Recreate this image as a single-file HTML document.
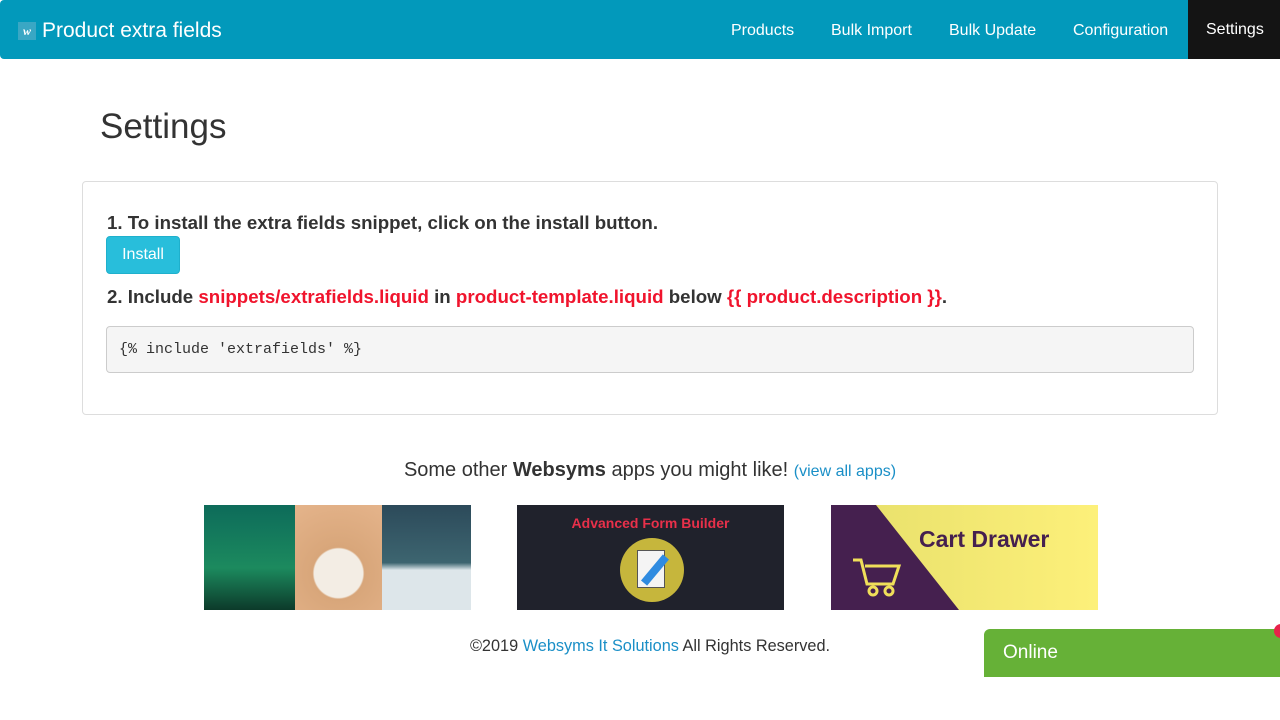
<!DOCTYPE html>
<html><head><meta charset="utf-8"><style>
*{box-sizing:border-box}
body{margin:0;width:1280px;height:720px;overflow:hidden;font-family:"Liberation Sans",sans-serif;color:#333;background:#fff;position:relative}
.nav{position:absolute;left:0;top:0;width:1280px;height:59px;background:#0299bb;border-radius:4px 0 0 4px}
.brand{position:absolute;left:18px;top:19px;color:#fff;font-size:21px;line-height:24px}
.brand i{display:inline-block;width:18px;height:18px;background:#3aa7c4;font-style:italic;font-weight:bold;font-size:12px;text-align:center;line-height:18px;vertical-align:2px;margin-right:6px;font-family:"Liberation Serif",serif}
.nav a{position:absolute;top:1px;height:59px;line-height:59px;color:#fff;font-size:16px;text-decoration:none}
.act{background:#141414;padding:0 18px;top:0!important}
h1{position:absolute;left:100px;top:107px;margin:0;font-size:35px;font-weight:normal;color:#333}
.panel{position:absolute;left:82px;top:181px;width:1136px;height:234px;border:1px solid #ddd;border-radius:4px}
.t{position:absolute;left:107px;font-size:18.7px;font-weight:bold;color:#333}
.r{color:#f0142d}
.btn{position:absolute;left:106px;top:236px;width:74px;height:38px;background:#28bedb;border:1px solid #1fb0cc;border-radius:4px;color:#fff;font-size:16px;text-align:center;line-height:36px}
pre{position:absolute;left:106px;top:326px;width:1088px;height:47px;margin:0;background:#f5f5f5;border:1px solid #ccc;border-radius:4px;font-family:"Liberation Mono",monospace;font-size:15px;padding:14px 12px;color:#333}
.other{position:absolute;left:0;width:1300px;top:459px;text-align:center;font-size:20px}
.other a{color:#1a8fc7;font-size:16px;text-decoration:none}
.img{position:absolute;top:505px;height:105px;width:267px;overflow:hidden}
.foot{position:absolute;top:637px;left:0;width:1300px;text-align:center;font-size:16.3px}
.foot a{color:#1a8fc7;text-decoration:none}
.online{position:absolute;left:984px;top:629px;width:296px;height:48px;background:#66b137;border-radius:6px 0 0 0;color:#fff;font-size:19px;line-height:48px;padding-left:19px}
.dot{position:absolute;left:1274px;top:624px;width:14px;height:14px;border-radius:50%;background:#e8234a}
</style></head><body>
<div class="nav">
<div class="brand"><i>w</i>Product extra fields</div>
<a style="left:731px">Products</a>
<a style="left:831px">Bulk Import</a>
<a style="left:949px">Bulk Update</a>
<a style="left:1073px">Configuration</a>
<a class="act" style="left:1188px;width:92px">Settings</a>
</div>
<h1>Settings</h1>
<div class="panel"></div>
<div class="t" style="top:212px">1. To install the extra fields snippet, click on the install button.</div>
<div class="btn">Install</div>
<div class="t" style="top:286px">2. Include <span class="r">snippets/extrafields.liquid</span> in <span class="r">product-template.liquid</span> below <span class="r">{{ product.description }}</span>.</div>
<pre>{% include 'extrafields' %}</pre>
<div class="other">Some other <b>Websyms</b> apps you might like! <a>(view all apps)</a></div>
<div class="img" style="left:204px;display:flex">
<div style="width:91px;background:linear-gradient(#0d6b5a,#1c8a5e 60%,#0c3a2a)"></div>
<div style="width:87px;background:radial-gradient(circle at 50% 65%,#f3ede4 30%,#d8a67a 32%,#e5b48b)"></div>
<div style="width:89px;background:linear-gradient(#2c4a5a,#3d6570 55%,#dde6ea 62%)"></div>
</div>
<div class="img" style="left:517px;background:#20222c">
<div style="position:absolute;top:10px;width:100%;text-align:center;color:#e8304a;font-size:14px;font-weight:bold">Advanced Form Builder</div>
<div style="position:absolute;left:103px;top:33px;width:64px;height:64px;border-radius:50%;background:#c6b63c"></div>
<div style="position:absolute;left:120px;top:45px;width:28px;height:38px;background:#f4f4f4;border:1px solid #555"></div>
<div style="position:absolute;left:134px;top:48px;width:8px;height:34px;background:#2f8be0;transform:rotate(40deg)"></div>
</div>
<div class="img" style="left:831px;background:linear-gradient(90deg,#e6df6a,#fdf07a)">
<svg style="position:absolute;left:0;top:0" width="140" height="105"><polygon points="0,0 45,0 128,105 0,105" fill="#45204f"/><g stroke="#f0df5a" stroke-width="3" fill="none"><path d="M22 55h8l6 24h26l6-18H34"/><circle cx="42" cy="86" r="4"/><circle cx="58" cy="86" r="4"/></g></svg>
<div style="position:absolute;left:88px;top:21px;color:#45204f;font-size:23px;font-weight:bold">Cart Drawer</div>
</div>
<div class="foot">©2019 <a>Websyms It Solutions</a> All Rights Reserved.</div>
<div class="online">Online</div>
<div class="dot"></div>
</body></html>
